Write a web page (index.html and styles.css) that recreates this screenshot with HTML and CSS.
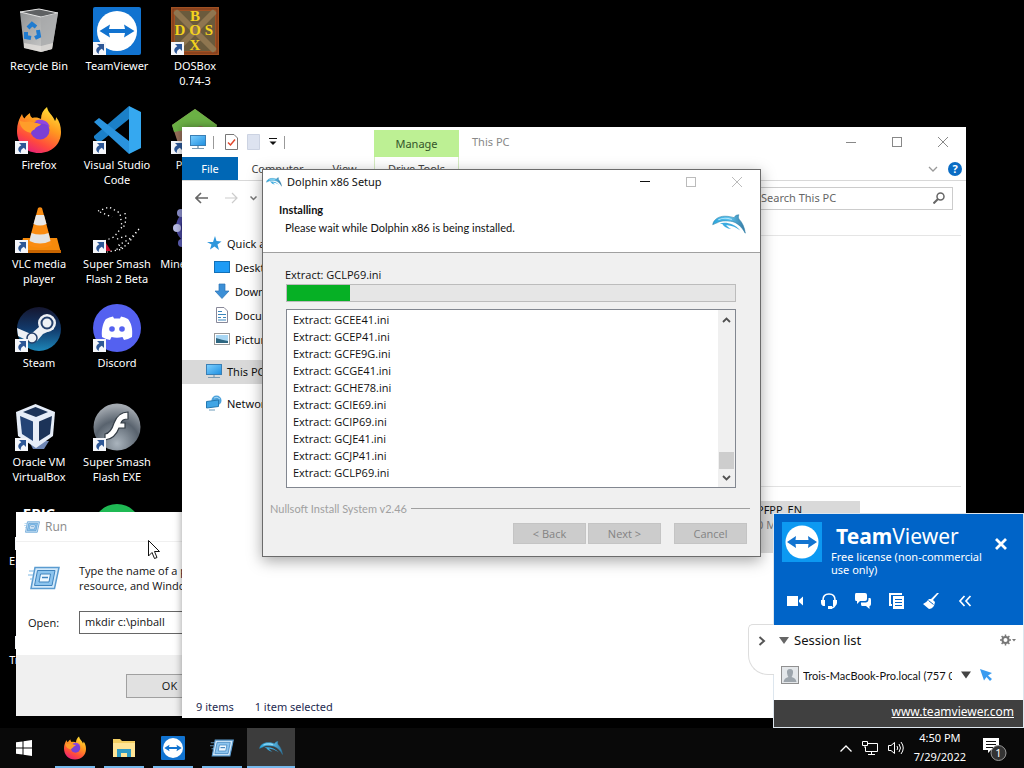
FILE: index.html
```html
<!DOCTYPE html>
<html lang="en">
<head>
    <meta charset="UTF-8">
    <meta name="viewport" content="width=device-width, initial-scale=1.0">
    <title>Desktop</title>
    <link rel="stylesheet" href="styles.css">
</head>
<body>
    <!-- shared icons -->
    <svg class="defs" width="0" height="0" aria-hidden="true">
        <defs>
            <linearGradient id="fxOuter" x1="0.8" y1="0" x2="0.3" y2="1">
                <stop offset="0" stop-color="#ffe63a"/>
                <stop offset="0.4" stop-color="#ff9a1f"/>
                <stop offset="0.75" stop-color="#ff4a3d"/>
                <stop offset="1" stop-color="#e8207a"/>
            </linearGradient>
            <linearGradient id="steamBg" x1="0" y1="0" x2="0" y2="1">
                <stop offset="0" stop-color="#15162f"/>
                <stop offset="0.5" stop-color="#123a6b"/>
                <stop offset="1" stop-color="#1d86b8"/>
            </linearGradient>
            <radialGradient id="flashBg" cx="0.5" cy="0.85" r="0.8">
                <stop offset="0" stop-color="#aab4bd"/>
                <stop offset="0.6" stop-color="#59636e"/>
                <stop offset="1" stop-color="#a3a9b0"/>
            </radialGradient>
            <linearGradient id="screen" x1="0" y1="0" x2="1" y2="1">
                <stop offset="0" stop-color="#7fd0ff"/>
                <stop offset="1" stop-color="#1e8fe0"/>
            </linearGradient>
            <linearGradient id="bin" x1="0" y1="0" x2="1" y2="1">
                <stop offset="0" stop-color="#8d8f91"/>
                <stop offset="1" stop-color="#d8d8d6"/>
            </linearGradient>
            <linearGradient id="dolphinFill" x1="0" y1="0" x2="1" y2="0">
                <stop offset="0" stop-color="#2aa5dc"/>
                <stop offset="0.5" stop-color="#5cc4f0"/>
                <stop offset="1" stop-color="#3577a0"/>
            </linearGradient>
        </defs>
        <symbol id="arrow" viewBox="0 0 13 13">
            <rect width="13" height="13" fill="#f4f6fa"/>
            <path d="M4 2h7v7L8.800 6.800C6.500 8 5.600 9.400 5.800 12C1.800 9.500 3 5.800 6.300 4.300z" fill="#2d5796"/>
        </symbol>
        <symbol id="teamviewer" viewBox="0 0 48 48">
            <rect width="48" height="48" rx="2" fill="#1173d0"/>
            <circle cx="24" cy="24" r="20" fill="#fff"/>
            <path d="M6.500 24L17 17.500L16 22H32L31 17.500L41.500 24L31 30.500L32 26H16L17 30.500z" fill="#1173d0"/>
        </symbol>
        <symbol id="firefox" viewBox="0 0 48 48">
            <path d="M24 47C11 47 2 38 2 25C2 18 4 13 7 8C7.500 10 8 11 9.500 12.500C11 10 12.500 8.500 15 7C15 9 15.500 11 17.500 12C21 11 24 12 26 13C26 8 28 4 32 1C33 7 38 9 40 15C41 13.500 41 12 41 11C44.500 15 46 20 46 26C46 38 37 47 24 47z" fill="url(#fxOuter)"/>
            <circle cx="25" cy="24" r="9.500" fill="#7a3fd6"/>
            <path d="M4 13C6 18 14 14 17 16C20 17 23 17 26 18C24 21 21 20 20 23C19 24 17 24 16 27C12 26 5 24 4 13z" fill="#ff9d2a"/>
            <path d="M20 15C25 12 33 14 35 21C32 18 28 17 25 18z" fill="#9146e0"/>
        </symbol>
        <symbol id="dolphin" viewBox="0 0 48 28">
            <path d="M1 15C2 8 9 3 18 3C24 3 27 4 31 5C33 2 35 1 38 1C37 3 37 5 38 7C43 12 46 19 47 27C42 18 35 11 26 10C16 9 11 10 8 12C6 13 3 14 1 15z" fill="url(#dolphinFill)" stroke="#2c7fa8" stroke-width="0.800"/>
            <path d="M11 13C20 11 31 13 40 23C31 17 25 16 20 15.500C22 18 24 20 27 21C21 21 16 17 15 14.500z" fill="#3cabe0"/>
            <path d="M9 8C15 5 22 5.500 28 7.500" fill="none" stroke="#b5e6fb" stroke-width="1.500"/>
        </symbol>
        <symbol id="run" viewBox="0 0 32 24">
            <path d="M7 1.500H31L26.500 22.500H3z" fill="#d3e9fa" stroke="#5a9bd0" stroke-width="1.500"/>
            <path d="M9.500 4.500H27L24 19.500H6.500z" fill="#8cc4ee" stroke="#3f83bd"/>
            <path d="M12.500 8H22.500L21 16H11z" fill="#eef8ff" stroke="#3f83bd"/>
            <path d="M14 11.500h6" stroke="#3f83bd" stroke-width="1.500"/>
            <path d="M1 5h5M0 9h5M2 13h3" stroke="#7db8e4"/>
        </symbol>
        <symbol id="pc" viewBox="0 0 16 16">
            <rect x="0.500" y="1.500" width="15" height="10" fill="url(#screen)" stroke="#3a7fb5"/>
            <path d="M2 14.500h12" stroke="#7d9bb0"/>
            <path d="M7 12h2v2h-2z" fill="#9fb6c5"/>
        </symbol>
        <symbol id="closeX" viewBox="0 0 12 12">
            <path d="M1 1L11 11M11 1L1 11" stroke="currentColor" fill="none"/>
        </symbol>
    </svg>

    <main class="desktop">
        <!-- desktop shortcuts, laid out column by column -->
        <ul class="shortcuts">
            <li class="shortcut">
                <svg class="pic" viewBox="0 0 48 48">
                    <path d="M5 5L24 2L43 6L37 42L26 45L9 41z" fill="url(#bin)"/>
                    <path d="M5 5L24 2L43 6L26 10z" fill="#5f6163" stroke="#e4e4e4"/>
                    <path d="M26 10L43 6L37 42L26 45z" fill="#a7a8aa" opacity="0.700"/>
                    <path d="M9 36L26 39L38 36L37 42L26 45L9 41z" fill="#eee9e4" opacity="0.600"/>
                    <path d="M13 21L17 17L21 20M23 23L24 29L20 31M16 31L11 30L11 25" fill="none" stroke="#1f7bd0" stroke-width="4"/>
                </svg>
                <span>Recycle Bin</span>
            </li>
            <li class="shortcut">
                <svg class="pic"><use href="#firefox"/></svg>
                <svg class="arrow"><use href="#arrow"/></svg>
                <span>Firefox</span>
            </li>
            <li class="shortcut">
                <svg class="pic" viewBox="0 0 48 48">
                    <path d="M8 33H42L46 48H4z" fill="#f58a0b"/>
                    <path d="M4 45H46V48H4z" fill="#c96500"/>
                    <path d="M23 3Q25 1.500 27 3L37 40Q25 46 13 40z" fill="#fa8c12"/>
                    <path d="M21 10H29L31.500 19Q25 22 18.500 19z" fill="#e9e9e9"/>
                    <path d="M16.500 28Q25 31 33.500 28L35.500 36Q25 41 14.500 36z" fill="#e3e3e3"/>
                </svg>
                <svg class="arrow"><use href="#arrow"/></svg>
                <span>VLC media player</span>
            </li>
            <li class="shortcut">
                <svg class="pic" viewBox="0 0 48 48">
                    <circle cx="24" cy="25" r="22" fill="url(#steamBg)"/>
                    <path d="M2 24L16 30L24 23L26 13L38 13L39 25L28 30L22 37L15 38L3 32z" fill="#eef1f5"/>
                    <circle cx="32" cy="19" r="9" fill="#eef1f5"/>
                    <circle cx="32" cy="19" r="5.500" fill="#eef1f5" stroke="#25406b" stroke-width="2"/>
                    <circle cx="17" cy="34" r="5" fill="#eef1f5" stroke="#25406b" stroke-width="1.500"/>
                </svg>
                <svg class="arrow"><use href="#arrow"/></svg>
                <span>Steam</span>
            </li>
            <li class="shortcut">
                <svg class="pic" viewBox="0 0 48 48">
                    <path d="M14 38L34 38L29 46H18z" fill="#6f87b5"/>
                    <path d="M20.500 1L40 9L38 33L21 45L3 33L1 9z" fill="#e6edf8"/>
                    <path d="M20.500 4L33 9L21 14L8 9z" fill="#1c3358"/>
                    <path d="M5 13L18 18.500L18 38L7 31z" fill="#244476"/>
                    <path d="M37 13L24 18.500L24 38L35 31z" fill="#1c3358"/>
                </svg>
                <svg class="arrow"><use href="#arrow"/></svg>
                <span>Oracle VM VirtualBox</span>
            </li>
            <li class="shortcut">
                <svg class="pic" viewBox="0 0 48 48">
                    <rect x="4" width="40" height="48" rx="4" fill="#000"/>
                    <text x="24" y="17" class="epic">EPIC</text>
                </svg>
                <svg class="arrow"><use href="#arrow"/></svg>
                <span>Epic Games</span>
            </li>
            <li class="shortcut">
                <svg class="pic" viewBox="0 0 48 48"><rect x="4" y="4" width="40" height="40" fill="#30343a"/></svg>
                <svg class="arrow"><use href="#arrow"/></svg>
                <span>Trackmania</span>
            </li>
            <li class="shortcut">
                <svg class="pic"><use href="#teamviewer"/></svg>
                <svg class="arrow"><use href="#arrow"/></svg>
                <span>TeamViewer</span>
            </li>
            <li class="shortcut">
                <svg class="pic" viewBox="0 0 48 48">
                    <path d="M36 0V13L6 37L1 32V30z" fill="#1b80c8"/>
                    <path d="M1 16L6 12L36 35V48z" fill="#2a93dd"/>
                    <path d="M36 0L48 6V42L36 48z" fill="#35a8f0"/>
                </svg>
                <svg class="arrow"><use href="#arrow"/></svg>
                <span>Visual Studio Code</span>
            </li>
            <li class="shortcut">
                <svg class="pic" viewBox="0 0 48 48">
                    <path d="M5 6L16 2L27 8L29 22L21 32L11 36M7 7L19 12M32 8L33 15L30 24M46 24L38 33L26 40L30 44L14 47M46 24L34 40L22 45M24 34L36 30" fill="none" stroke="#fff" stroke-width="1.300" stroke-dasharray="1.300 3"/>
                    <path d="M13 38L18 46H12z" fill="#c01030"/>
                </svg>
                <svg class="arrow"><use href="#arrow"/></svg>
                <span>Super Smash Flash 2 Beta</span>
            </li>
            <li class="shortcut">
                <svg class="pic" viewBox="0 0 48 48">
                    <circle cx="24" cy="24" r="24" fill="#5461f0"/>
                    <path d="M9 33C8 24 11 17 13 15Q16 13 20 12.500L21 14.500H27L28 12.500Q32 13 35 15C38 19 40 24 39 33Q35 35.500 31 36L29.500 33Q24 34.500 18.500 33L17 36Q13 35.500 9 33z" fill="#fff"/>
                    <circle cx="19" cy="25" r="2.800" fill="#5461f0"/>
                    <circle cx="29" cy="25" r="2.800" fill="#5461f0"/>
                </svg>
                <svg class="arrow"><use href="#arrow"/></svg>
                <span>Discord</span>
            </li>
            <li class="shortcut">
                <svg class="pic" viewBox="0 0 48 48">
                    <circle cx="24" cy="24" r="23.500" fill="url(#flashBg)"/>
                    <path d="M35 9V16Q29 16 28 20H32V25H26Q22 36 12 37V31Q18 30 21 20Q25 9 35 9z" fill="#fff" stroke="#333c45" stroke-width="1.200"/>
                </svg>
                <svg class="arrow"><use href="#arrow"/></svg>
                <span>Super Smash Flash EXE</span>
            </li>
            <li class="shortcut">
                <svg class="pic" viewBox="0 0 48 48"><circle cx="24" cy="26" r="24" fill="#1fb954"/></svg>
            </li>
            <li class="shortcut"></li>
            <li class="shortcut">
                <svg class="pic" viewBox="0 0 48 48">
                    <rect width="48" height="48" fill="#a05022"/>
                    <rect x="4" y="4" width="40" height="40" fill="#6a5a3c"/>
                    <path d="M4 4L44 44M44 4L4 44" stroke="#8f7650" stroke-width="6"/>
                    <rect x="2" y="2" width="44" height="44" fill="none" stroke="#74371a"/>
                    <g class="dosbox">
                        <text x="24" y="14">B</text>
                        <text x="9" y="28">D</text>
                        <text x="24" y="28">O</text>
                        <text x="38" y="28">S</text>
                        <text x="24" y="43">X</text>
                    </g>
                </svg>
                <svg class="arrow"><use href="#arrow"/></svg>
                <span>DOSBox<br>0.74-3</span>
            </li>
            <li class="shortcut">
                <svg class="pic" viewBox="0 0 48 48">
                    <path d="M24 3L46 19L38 46H10L1 19z" fill="#96705a"/>
                    <path d="M24 3L46 19L44 25L30 20L14 24L3 26L1 19z" fill="#6bb045"/>
                </svg>
                <svg class="arrow"><use href="#arrow"/></svg>
                <span>PolyMC</span>
            </li>
            <li class="shortcut">
                <svg class="pic" viewBox="0 0 48 48">
                    <circle cx="22" cy="22" r="17" fill="#4a48a0"/>
                    <circle cx="6" cy="23" r="4" fill="#b9bce6"/>
                    <circle cx="10" cy="8" r="4" fill="#8f93d0"/>
                    <circle cx="11" cy="38" r="4" fill="#5f61b8"/>
                    <circle cx="23" cy="22" r="13" fill="#302c80"/>
                </svg>
                <span>Minesweeper</span>
            </li>
        </ul>

        <!-- Run dialog -->
        <form class="window run-window">
            <header class="run-title">
                <svg width="16" height="12"><use href="#run"/></svg>
                <h2>Run</h2>
            </header>
            <div class="run-body">
                <div class="run-intro">
                    <svg width="32" height="24"><use href="#run"/></svg>
                    <p>Type the name of a program, folder, document, or Internet resource, and Windows will open it for you.</p>
                </div>
                <div class="run-field">
                    <label for="runOpen">Open:</label>
                    <input type="text" id="runOpen" value="mkdir c:\pinball">
                </div>
            </div>
            <footer class="run-footer">
                <button type="button" class="btn">OK</button>
            </footer>
        </form>

        <!-- File explorer -->
        <section class="window explorer">
            <header class="explorer-title">
                <div class="quick-bar">
                    <svg width="16" height="16"><use href="#pc"/></svg>
                    <i class="sep"></i>
                    <svg width="13" height="16" viewBox="0 0 13 16">
                        <path d="M0.500 0.500H9L12.500 4V15.500H0.500z" fill="#fff" stroke="#777"/>
                        <path d="M3 8.500L5.500 11L10 5.500" fill="none" stroke="#e0462c" stroke-width="1.500"/>
                    </svg>
                    <svg width="13" height="16" viewBox="0 0 13 16">
                        <path d="M0.500 0.500H12.500V15.500H0.500z" fill="#dde3f0" stroke="#ccd3e2"/>
                    </svg>
                    <svg width="8" height="8" viewBox="0 0 8 8">
                        <path d="M0 0.500H8" stroke="#111"/>
                        <path d="M0.500 3.500H7.500L4 7z" fill="#111"/>
                    </svg>
                    <i class="sep"></i>
                </div>
                <span class="manage-tab">Manage</span>
                <h2>This PC</h2>
                <div class="controls">
                    <button type="button" aria-label="Minimize"><i class="min"></i></button>
                    <button type="button" aria-label="Maximize"><i class="max"></i></button>
                    <button type="button" aria-label="Close"><svg width="12" height="12"><use href="#closeX"/></svg></button>
                </div>
            </header>
            <nav class="ribbon">
                <button type="button" class="file">File</button>
                <button type="button" class="tab-computer">Computer</button>
                <button type="button" class="tab-view">View</button>
                <button type="button" class="tab-drive">Drive Tools</button>
                <div class="ribbon-end">
                    <svg width="10" height="6" viewBox="0 0 10 6"><path d="M1 1L5 5L9 1" fill="none" stroke="#999" stroke-width="1.300"/></svg>
                    <button type="button" class="help" aria-label="Help">?</button>
                </div>
            </nav>
            <div class="address">
                <svg width="13" height="12" viewBox="0 0 13 12"><path d="M6 1L1 6L6 11M1 6H13" fill="none" stroke="#666" stroke-width="1.600"/></svg>
                <svg width="13" height="12" viewBox="0 0 13 12"><path d="M7 1L12 6L7 11M12 6H0" fill="none" stroke="#ccc" stroke-width="1.200"/></svg>
                <svg width="7" height="5" viewBox="0 0 7 5"><path d="M0.500 0.500L3.500 3.500L6.500 0.500" fill="none" stroke="#777" stroke-width="1.500"/></svg>
                <div class="search">
                    <input type="text" aria-label="Search" placeholder="Search This PC">
                    <svg width="12" height="12" viewBox="0 0 12 12"><circle cx="7.500" cy="4.500" r="3.500" fill="none" stroke="#666" stroke-width="1.500"/><path d="M5 7L0.500 11.500" stroke="#666" stroke-width="2"/></svg>
                </div>
            </div>
            <div class="explorer-body">
                <ul class="tree">
                    <li>
                        <svg width="16" height="16" viewBox="0 0 16 16"><path d="M9 1L10.500 6L15.500 6.500L11.500 9.500L13 15L8.500 11.500L4 14.500L5.500 9.500L1 7H7z" fill="#2e97dc"/></svg>
                        Quick access
                    </li>
                    <li class="child">
                        <svg width="16" height="16" viewBox="0 0 16 16"><rect x="0.500" y="2.500" width="15" height="11" fill="#1e9bf5" stroke="#1270b8"/></svg>
                        Desktop
                    </li>
                    <li class="child">
                        <svg width="16" height="16" viewBox="0 0 16 16"><path d="M5 1H11V8H15L8 15.500L1 8H5z" fill="#3c8fd6" stroke="#2c72b4" stroke-width="0.700"/></svg>
                        Downloads
                    </li>
                    <li class="child">
                        <svg width="16" height="16" viewBox="0 0 16 16"><path d="M2.500 0.500H10L13.500 4V15.500H2.500z" fill="#fff" stroke="#889"/><path d="M4 4.500h4M4 7.500h8M4 10.500h3M9 10.500h3M4 13h8" stroke="#3b86bb" stroke-width="1.200"/></svg>
                        Documents
                    </li>
                    <li class="child">
                        <svg width="16" height="16" viewBox="0 0 16 16"><rect x="0.500" y="2.500" width="15" height="11" fill="#fff" stroke="#999"/><rect x="2" y="4" width="12" height="8" fill="#a8d6f3"/><path d="M2 7Q8 9 14 10V12H2z" fill="#2d6680"/></svg>
                        Pictures
                    </li>
                    <li class="root selected"><svg width="16" height="16"><use href="#pc"/></svg>This PC</li>
                    <li class="root">
                        <svg width="16" height="16" viewBox="0 0 16 16"><circle cx="10.500" cy="5.500" r="5" fill="#4ea3dc"/><path d="M8 3Q11 1 14 4" fill="none" stroke="#a8d8f5"/><path d="M0.500 6.500L12.500 5V11.500L0.500 13z" fill="#40a5e5" stroke="#2478b0"/><path d="M3 15h6" stroke="#6d9cba"/></svg>
                        Network
                    </li>
                </ul>
                <div class="files">
                    <div class="files-head"></div>
                    <div class="files-folders"></div>
                    <div class="drive">
                        <span>PFPP_EN</span>
                        <small>0 MB</small>
                    </div>
                </div>
            </div>
            <footer class="status">
                <span>9 items</span>
                <span>1 item selected</span>
            </footer>
        </section>

        <!-- Installer -->
        <section class="window setup">
            <header class="setup-title">
                <svg width="16" height="10"><use href="#dolphin"/></svg>
                <h2>Dolphin x86 Setup</h2>
                <div class="controls">
                    <button type="button" aria-label="Minimize"><i class="min"></i></button>
                    <button type="button" aria-label="Maximize" disabled><i class="max"></i></button>
                    <button type="button" aria-label="Close" disabled><svg width="12" height="12"><use href="#closeX"/></svg></button>
                </div>
            </header>
            <div class="setup-banner">
                <div>
                    <h3>Installing</h3>
                    <p>Please wait while Dolphin x86 is being installed.</p>
                </div>
                <svg width="34" height="20"><use href="#dolphin"/></svg>
            </div>
            <div class="setup-body">
                <label for="installProgress">Extract: GCLP69.ini</label>
                <progress id="installProgress" max="100" value="14"></progress>
                <div class="log">
                    <ul>
                        <li>Extract: GCEE41.ini</li>
                        <li>Extract: GCEP41.ini</li>
                        <li>Extract: GCFE9G.ini</li>
                        <li>Extract: GCGE41.ini</li>
                        <li>Extract: GCHE78.ini</li>
                        <li>Extract: GCIE69.ini</li>
                        <li>Extract: GCIP69.ini</li>
                        <li>Extract: GCJE41.ini</li>
                        <li>Extract: GCJP41.ini</li>
                        <li>Extract: GCLP69.ini</li>
                    </ul>
                    <div class="scrollbar">
                        <svg width="9" height="6" viewBox="0 0 9 6"><path d="M1 5L4.500 1.500L8 5" fill="none" stroke="#505050" stroke-width="1.800"/></svg>
                        <i class="thumb"></i>
                        <svg width="9" height="6" viewBox="0 0 9 6"><path d="M1 1L4.500 4.500L8 1" fill="none" stroke="#505050" stroke-width="1.800"/></svg>
                    </div>
                </div>
            </div>
            <div class="setup-brand">Nullsoft Install System v2.46</div>
            <footer class="setup-buttons">
                <button type="button" disabled>&lt; Back</button>
                <button type="button" disabled>Next &gt;</button>
                <button type="button" class="cancel" disabled>Cancel</button>
            </footer>
        </section>

        <!-- TeamViewer panel -->
        <aside class="tv">
            <button type="button" class="tv-handle" aria-label="Collapse">
                <svg width="8" height="10" viewBox="0 0 8 10"><path d="M1.500 1L6 5L1.500 9" fill="none" stroke="#555" stroke-width="2"/></svg>
            </button>
            <div class="tv-head">
                <div class="tv-brand">
                    <svg class="tv-logo" viewBox="0 0 40 40">
                        <rect width="40" height="40" fill="#0c99f2"/>
                        <circle cx="20" cy="20" r="16.500" fill="#fff"/>
                        <path d="M5 20L14 14L13.500 18H26.500L26 14L35 20L26 26L26.500 22H13.500L14 26z" fill="#1173d0"/>
                    </svg>
                    <div class="tv-name">
                        <h2><b>Team</b>Viewer</h2>
                        <p>Free license (non-commercial use only)</p>
                    </div>
                    <button type="button" class="tv-close" aria-label="Close">
                        <svg width="12" height="12" viewBox="0 0 12 12"><path d="M1 1L11 11M11 1L1 11" stroke="#fff" stroke-width="2.800"/></svg>
                    </button>
                </div>
                <div class="tv-tools">
                    <button type="button" aria-label="Video"><svg viewBox="0 0 18 18"><path d="M1 4H12V14H1zM13 8L17 4.500V13.500L13 10z" fill="#fff"/></svg></button>
                    <button type="button" aria-label="Audio"><svg viewBox="0 0 18 18"><path d="M3 9V8Q3 2 9 2T15 8V9M15 12Q15 16 10 16" fill="none" stroke="#fff" stroke-width="1.600"/><path d="M1 8H5V14H3Q1 13 1 11zM17 8H13V14H15Q17 13 17 11zM8 14h4v3H8z" fill="#fff"/></svg></button>
                    <button type="button" aria-label="Chat"><svg viewBox="0 0 18 18"><path d="M2 1H11Q13 1 13 3V7Q13 9 11 9H6L3 12V9H2Q1 9 1 7V3Q1 1 2 1z" fill="#fff"/><path d="M14.500 6H16Q17 6 17 8V12Q17 14 15.500 14V17L12 14H8Q7 14 7 12V10.500H12Q14.500 10 14.500 7z" fill="#fff"/></svg></button>
                    <button type="button" aria-label="Files"><svg viewBox="0 0 18 18"><path d="M13 3V2H2V13H4" fill="none" stroke="#fff" stroke-width="2"/><path d="M5 4H16V17H5z" fill="#fff"/><path d="M7 7.500H14M7 10.500H14M7 13.500H14" stroke="#0064c8" stroke-width="1.200"/></svg></button>
                    <button type="button" aria-label="Whiteboard"><svg viewBox="0 0 18 18"><path d="M17 1L11 8L13 10Q12 17 7 17L1 12Q4 11 7 7L9 7L15 1z" fill="#fff"/><path d="M6.500 8.500L11.500 12.500" stroke="#0064c8"/></svg></button>
                    <button type="button" aria-label="Less"><svg viewBox="0 0 18 18"><path d="M8.500 4L4 9L8.500 14M14.500 4L10 9L14.500 14" fill="none" stroke="#fff" stroke-width="1.700"/></svg></button>
                </div>
            </div>
            <div class="tv-session">
                <div class="tv-row">
                    <svg width="10" height="8" viewBox="0 0 10 8"><path d="M0 1H10L5 8z" fill="#666"/></svg>
                    <h3>Session list</h3>
                    <svg class="gear" width="16" height="12" viewBox="0 0 16 12"><circle cx="5.500" cy="6" r="3" fill="none" stroke="#777" stroke-width="2"/><path d="M5.500 0.500V2.500M5.500 9.500V11.500M0 6H2M9 6H11M1.600 2.100L3 3.500M8 8.500L9.400 9.900M9.400 2.100L8 3.500M3 8.500L1.600 9.900" stroke="#777" stroke-width="1.500"/><path d="M12 5H16L14 7.500z" fill="#777"/></svg>
                </div>
                <div class="tv-row peer">
                    <svg width="18" height="18" viewBox="0 0 18 18"><rect x="0.500" y="0.500" width="17" height="17" fill="#e4e7ea" stroke="#909090"/><path d="M9 3Q12.500 3 12 7Q11.500 10 10.500 11Q15 12 15.500 16H2.500Q3 12 7.500 11Q6.500 10 6 7Q5.500 3 9 3z" fill="#9da5ac"/></svg>
                    <span class="peer-name">Trois-MacBook-Pro.local (757 0</span>
                    <svg width="10" height="8" viewBox="0 0 10 8"><path d="M0 0.500H10L5 7.500z" fill="#444"/></svg>
                    <svg width="12" height="12" viewBox="0 0 12 12"><path d="M0 0L12 4L8 6.500L12 10L10 12L6.500 8L4 11.500z" fill="#3a9bf0"/></svg>
                </div>
            </div>
            <div class="tv-foot"><a href="#">www.teamviewer.com</a></div>
        </aside>

        <svg class="pointer" viewBox="0 0 12 19"><path d="M0.500 0.500V16L4 12.500L6.500 18.500L9 17.500L6.500 11.500H11.500z" fill="#fff" stroke="#111"/></svg>
    </main>

    <!-- Taskbar -->
    <footer class="taskbar">
        <button type="button" class="start" aria-label="Start">
            <svg width="16" height="16" viewBox="0 0 16 16"><path d="M0 2.300L6.500 1.400V7.500H0zM7.500 1.200L16 0V7.500H7.500zM0 8.500H6.500V14.600L0 13.700zM7.500 8.500H16V16L7.500 14.800z" fill="#fff"/></svg>
        </button>
        <button type="button" class="task" aria-label="Firefox"><svg width="24" height="24"><use href="#firefox"/></svg></button>
        <button type="button" class="task" aria-label="File Explorer">
            <svg width="24" height="24" viewBox="0 0 24 24"><path d="M1 3H8L10 5H23V21H1z" fill="#f3cf63"/><path d="M1 7H23V21H1z" fill="#ffe596"/><path d="M5 13H19V21H15V17H9V21H5z" fill="#2f9bc4"/></svg>
        </button>
        <button type="button" class="task" aria-label="TeamViewer"><svg width="24" height="24"><use href="#teamviewer"/></svg></button>
        <button type="button" class="task" aria-label="Run"><svg width="24" height="18"><use href="#run"/></svg></button>
        <button type="button" class="task active" aria-label="Dolphin"><svg width="24" height="14"><use href="#dolphin"/></svg></button>
        <div class="tray">
            <svg width="12" height="7" viewBox="0 0 12 7"><path d="M0.500 6.500L6 1L11.500 6.500" fill="none" stroke="#fff" stroke-width="1.300"/></svg>
            <svg width="16" height="16" viewBox="0 0 16 16"><path d="M5 3.500H15.500V11.500H3.500V7M0.500 1.500H5.500V5.500H0.500zM3 5.500V8M9.500 11.500V14M6 14.500H13" fill="none" stroke="#fff"/></svg>
            <svg width="16" height="14" viewBox="0 0 16 14"><path d="M0.500 4.500H3L6.500 1.500V12.500L3 9.500H0.500zM9 5Q10.500 7 9 9M11 3Q14 7 11 11M13 1Q17.500 7 13 13" fill="none" stroke="#fff"/></svg>
            <div class="clock"><span>4:50 PM</span><span>7/29/2022</span></div>
            <svg width="26" height="26" viewBox="0 0 26 26"><path d="M1 3H17V15H9L6 18V15H1z" fill="#fff"/><path d="M4 6.500H14M4 9.500H14M4 12.500H11" stroke="#111"/><circle cx="16.500" cy="18" r="7.500" fill="#333" stroke="#999"/><text x="16.500" y="22" class="count">1</text></svg>
        </div>
    </footer>
</body>
</html>
```
FILE: styles.css
```css
* {
    box-sizing: border-box;
}
body {
    margin: 0;
    height: 100vh;
    display: flex;
    flex-direction: column;
    overflow: hidden;
    background: #000;
    font-family: "Noto Sans", "Open Sans", sans-serif;
    font-size: 11px;
    line-height: 15px;
    color: #111;
}
h2, h3, p, ul {
    margin: 0;
    padding: 0;
    font-size: inherit;
    font-weight: normal;
}
ul {
    list-style: none;
}
svg {
    display: block;
    flex-shrink: 0;
}
button, input {
    font: inherit;
    color: inherit;
}
button {
    border: none;
    background: none;
    padding: 0;
    display: flex;
    align-items: center;
    justify-content: center;
}
.defs {
    position: absolute;
}
.desktop {
    position: relative;
    flex: 1;
    min-height: 0;
}

/* shortcuts */
.shortcuts {
    display: grid;
    grid-auto-flow: column;
    grid-template-rows: repeat(7, 99px);
    grid-auto-columns: 78px;
    justify-content: start;
    padding-top: 7px;
}
.shortcut {
    position: relative;
    display: flex;
    flex-direction: column;
    align-items: center;
    gap: 3px;
    color: #fff;
    text-align: center;
}
.shortcut .pic {
    width: 48px;
    height: 48px;
}
.shortcut .arrow {
    position: absolute;
    left: 15px;
    top: 35px;
    width: 13px;
    height: 13px;
}
.epic {
    font: bold 15px "Open Sans", sans-serif;
    fill: #fff;
    text-anchor: middle;
}
.dosbox {
    font: bold 15px "Liberation Serif", serif;
    fill: #f3d21e;
    text-anchor: middle;
}

/* windows */
.window {
    position: absolute;
    display: flex;
    flex-direction: column;
    background: #fff;
}
.controls {
    display: flex;
    margin-left: auto;
    align-self: stretch;
}
.controls button {
    width: 46px;
}
.controls .min {
    width: 10px;
    height: 1px;
    background: currentColor;
}
.controls .max {
    width: 10px;
    height: 10px;
    border: 1px solid currentColor;
}

/* run */
.run-window {
    left: 16px;
    top: 512px;
    width: 399px;
    height: 204px;
    font-family: "Open Sans", sans-serif;
}
.run-title {
    display: flex;
    align-items: center;
    gap: 5px;
    height: 30px;
    padding-left: 8px;
    color: #8a8a8a;
    font-size: 12px;
    border-bottom: 1px solid #f0f0f0;
}
.run-body {
    flex: 1;
    padding: 21px 12px 0;
}
.run-intro {
    display: flex;
    align-items: center;
    gap: 19px;
}
.run-field {
    display: flex;
    align-items: center;
    margin-top: 18px;
}
.run-field label {
    width: 51px;
}
.run-field input {
    flex: 1;
    height: 23px;
    border: 1px solid #666;
    padding: 0 5px 2px;
    outline: none;
}
.run-footer {
    height: 61px;
    padding: 19px 110px;
    background: #f0f0f0;
}
.btn {
    width: 87px;
    height: 24px;
    padding-bottom: 1px;
    background: #e1e1e1;
    border: 1px solid #a0a0a0;
}

/* explorer */
.explorer {
    left: 182px;
    top: 127px;
    width: 784px;
    height: 591px;
    box-shadow: 0 0 8px rgba(0, 0, 0, 0.4);
}
.explorer-title {
    display: flex;
    align-items: center;
    height: 30px;
    color: #888;
}
.quick-bar {
    display: flex;
    align-items: center;
    gap: 9px;
    width: 192px;
    padding-left: 8px;
}
.quick-bar .sep {
    width: 1px;
    height: 13px;
    margin: 0 -2px;
    background: #999;
}
.quick-bar .sep:nth-of-type(1) {
    margin-right: 2px;
}
.manage-tab {
    width: 85px;
    align-self: flex-end;
    height: 27px;
    line-height: 28px;
    text-align: center;
    background: #bdf094;
    color: #33542a;
}
.explorer-title h2 {
    margin-left: 13px;
    padding-bottom: 2px;
}
.ribbon {
    display: flex;
    height: 24px;
    border-bottom: 1px solid #d8d8d8;
    color: #444;
}
.ribbon .file {
    width: 56px;
    background: #0067b5;
    color: #fff;
}
.tab-computer {
    width: 79px;
}
.tab-view {
    width: 55px;
}
.tab-drive {
    width: 85px;
    margin-left: 2px;
    border: solid #d5ecc0;
    border-width: 0 1px;
}
.ribbon-end {
    display: flex;
    align-items: center;
    gap: 10px;
    margin-left: auto;
    padding-right: 4px;
}
.help {
    width: 14px;
    height: 14px;
    border-radius: 50%;
    background: #0a6cc4;
    color: #fff;
    font-weight: bold;
}
.address {
    display: flex;
    align-items: center;
    gap: 17px;
    height: 34px;
    padding: 0 13px;
}
.address svg:nth-child(3) {
    margin-left: -5px;
}
.search {
    display: flex;
    align-items: center;
    width: 216px;
    height: 23px;
    margin-left: auto;
    padding-right: 7px;
    border: 1px solid #ccc;
}
.search input {
    flex: 1;
    min-width: 0;
    border: none;
    outline: none;
    padding: 0 0 2px 23px;
}
.search input::placeholder {
    color: #666;
    opacity: 1;
}
.explorer-body {
    display: flex;
    flex: 1;
    min-height: 0;
}
.tree {
    width: 160px;
    padding-top: 17px;
}
.tree li {
    display: flex;
    align-items: center;
    gap: 5px;
    height: 24px;
    padding: 0 0 2px 24px;
}
.tree .child {
    padding-left: 32px;
}
.tree .root {
    margin-top: 8px;
}
.tree .selected {
    background: #d9d9d9;
}
.files {
    flex: 1;
    padding-right: 5px;
}
.files-head {
    height: 21px;
    border-bottom: 1px solid #e5e5e5;
}
.files-folders {
    height: 251px;
    border-bottom: 1px solid #e2e2e2;
}
.drive {
    display: flex;
    flex-direction: column;
    width: 259px;
    height: 52px;
    margin: 14px 0 0 259px;
    padding: 1px 0 0 156px;
    background: #d9d9d9;
}
.drive small {
    font-size: 11px;
    color: #777;
}
.status {
    display: flex;
    align-items: center;
    gap: 21px;
    height: 24px;
    padding-left: 14px;
    color: #1e2a50;
}

/* installer */
.setup {
    left: 262px;
    top: 169px;
    width: 499px;
    height: 388px;
    background: #f0f0f0;
    border: 1px solid #6b6b6b;
    box-shadow: 0 4px 14px rgba(0, 0, 0, 0.35);
    font-family: "Open Sans", sans-serif;
}
.setup-title {
    display: flex;
    align-items: center;
    gap: 5px;
    height: 25px;
    padding: 0 0 2px 3px;
    background: #fff;
    font-family: "Noto Sans", sans-serif;
}
.setup-title .controls button:disabled {
    color: #bbb;
}
.setup-banner {
    display: flex;
    align-items: center;
    justify-content: space-between;
    height: 58px;
    padding: 0 14px 0 16px;
    background: #fff;
    border-bottom: 1px solid #a0a0a0;
}
.setup-banner h3 {
    font-family: Lato, sans-serif;
    font-weight: bold;
    line-height: 18px;
}
.setup-banner p {
    padding-left: 6px;
    line-height: 18px;
    margin-bottom: 10px;
    font-family: Lato, sans-serif;
}
.setup-body {
    padding: 14px 24px 0 23px;
}
.setup-body label {
    display: block;
    margin-left: -1px;
    height: 17px;
}
progress {
    display: block;
    width: 100%;
    height: 18px;
    appearance: none;
    border: 1px solid #bcbcbc;
    background: #e6e6e6;
}
progress::-webkit-progress-bar {
    background: #e6e6e6;
}
progress::-webkit-progress-value {
    background: #06b025;
}
.log {
    display: flex;
    height: 179px;
    margin-top: 7px;
    background: #fff;
    border: 1px solid #828790;
}
.log ul {
    flex: 1;
    padding: 1px 6px;
    line-height: 17px;
}
.scrollbar {
    display: flex;
    flex-direction: column;
    align-items: center;
    width: 17px;
    padding: 7px 0 6px;
    background: #f0f0f0;
}
.scrollbar .thumb {
    width: 15px;
    height: 17px;
    margin: auto 0 6px;
    background: #cdcdcd;
}
.setup-brand {
    display: flex;
    align-items: center;
    gap: 4px;
    margin-top: 13px;
    padding: 0 10px 0 7px;
    color: #a0a0a0;
    font-family: Lato, sans-serif;
}
.setup-brand::after {
    content: "";
    flex: 1;
    height: 1px;
    background: #a0a0a0;
}
.setup-buttons {
    display: flex;
    justify-content: flex-end;
    gap: 2px;
    padding: 7px 13px;
}
.setup-buttons button {
    width: 73px;
    height: 21px;
    background: #ccc;
    border: 1px solid #c4c4c4;
    color: #838383;
}
.setup-buttons .cancel {
    margin-left: 11px;
}

/* TeamViewer */
.tv {
    position: absolute;
    right: 0;
    bottom: 0;
    width: 251px;
    border: 1px solid #dde6ee;
    background: #fff;
}
.tv-handle {
    position: absolute;
    left: -26px;
    top: 110px;
    width: 26px;
    height: 51px;
    padding-bottom: 18px;
    background: #fff;
    border: 1px solid #ddd;
    border-right: none;
    border-radius: 5px 0 0 20px;
}
.tv-head {
    height: 111px;
    background: #0064c8;
    color: #fff;
}
.tv-brand {
    display: flex;
    padding: 8px 16px 0 8px;
}
.tv-logo {
    width: 40px;
    height: 40px;
}
.tv-name {
    flex: 1;
    padding-left: 9px;
}
.tv-name h2 {
    padding-left: 5px;
    font-size: 21px;
    line-height: 28px;
}
.tv-name p {
    line-height: 13px;
}
.tv-close {
    height: 44px;
}
.tv-tools {
    display: flex;
    gap: 16px;
    padding: 16px 12px;
}
.tv-tools svg {
    width: 18px;
    height: 18px;
}
.tv-session {
    height: 75px;
    padding: 5px 7px 0 5px;
}
.tv-row {
    display: flex;
    align-items: center;
    gap: 5px;
    height: 20px;
}
.tv-row h3 {
    font-size: 13px;
}
.gear {
    margin-left: auto;
}
.peer {
    gap: 9px;
    margin-top: 15px;
    padding-left: 2px;
    font-family: Lato, sans-serif;
}
.peer-name {
    width: 149px;
    margin-left: -5px;
    overflow: hidden;
    white-space: nowrap;
}
.tv-foot {
    height: 27px;
    padding-right: 9px;
    background: #404040;
    line-height: 24px;
    font-size: 12px;
    text-align: right;
}
.tv-foot a {
    color: #fff;
}
.pointer {
    position: absolute;
    left: 148px;
    top: 540px;
    width: 12px;
    height: 19px;
}

/* taskbar */
.taskbar {
    display: flex;
    gap: 1px;
    height: 40px;
    background: #090909;
    color: #fff;
}
.start {
    width: 48px;
}
.task {
    position: relative;
    width: 48px;
}
.task::after {
    content: "";
    position: absolute;
    left: 4px;
    right: 4px;
    bottom: 0;
    height: 2px;
    background: #76b9ed;
}
.task.active {
    background: #3c3c3c;
}
.task.active::after {
    left: 0;
    right: 0;
}
.start + .task {
    margin-left: 2px;
}
.tray {
    display: flex;
    align-items: center;
    gap: 10px;
    margin-left: auto;
    padding-right: 16px;
}
.clock {
    display: flex;
    flex-direction: column;
    align-items: center;
    gap: 4px;
    padding-bottom: 2px;
}
.tray .clock + svg {
    margin-left: 6px;
}
.count {
    font: 11px "Noto Sans", sans-serif;
    fill: #fff;
    text-anchor: middle;
}
```
